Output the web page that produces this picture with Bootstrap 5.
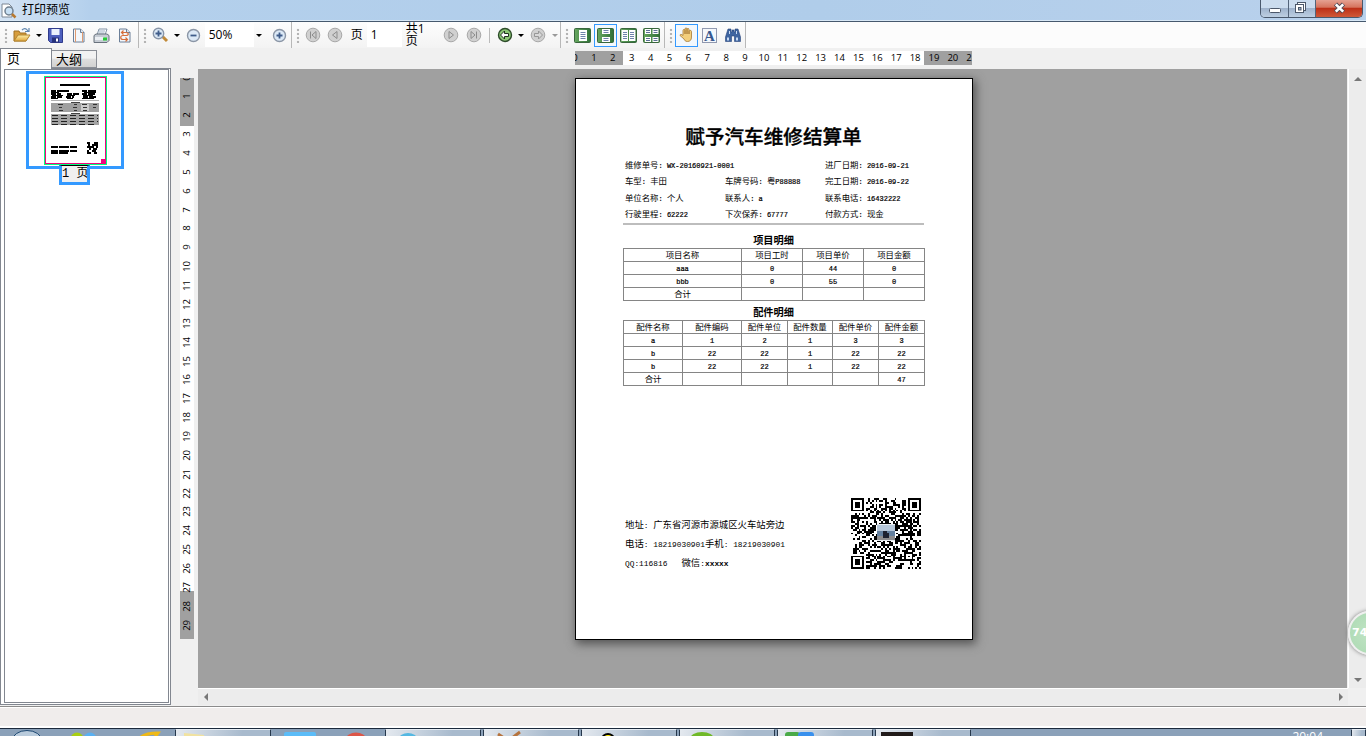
<!DOCTYPE html>
<html lang="zh-CN">
<head>
    <meta charset="UTF-8">
    <meta name="viewport" content="width=device-width, initial-scale=1.0">
    <title>打印预览</title>
    <link href="https://cdn.jsdelivr.net/npm/bootstrap@5.3.0/dist/css/bootstrap.min.css" rel="stylesheet">
    <style>
        body { width: 1366px; height: 736px; font: 12px/1 "Open Sans", "Noto Sans CJK SC", sans-serif; color: #000; background: #f0f0f0; }
        svg { display: block; flex: none; }

        /* title bar */
        .title-bar { height: 22px; background: linear-gradient(90deg, #d3e3f4, #b4d0ec 90px, #b0cdea 60%, #b9d1ec); border-bottom: 1px solid #46596e; box-shadow: inset 0 -1px #d8e8f6; padding-left: 1px; }
        .title-text { font-size: 12px; line-height: 20px; padding-left: 5px; }
        .win-buttons { width: 103px; height: 18px; margin-right: 3px; border: 1px solid #49586c; border-top: 0; border-radius: 0 0 5px 5px; overflow: hidden; }
        .win-btn { background: linear-gradient(#cbdcee 45%, #9fb3cc 50%, #bdcfe2); border-right: 1px solid #53647a; }
        .win-close { background: linear-gradient(#e5a192, #d6745e 42%, #bd3018 50%, #cf5838); }

        /* tool bar */
        .tool-bar { height: 26px; background: #fcfcfc; }
        .tool-group { height: 26px; padding-left: 3px; background: linear-gradient(#fdfdfd, #f3f3f3); border-right: 1px solid #b8b8b8; }
        .g-file { width: 139px; }
        .g-zoom { width: 153px; }
        .g-page { width: 269px; }
        .g-view { width: 104px; }
        .g-mode { width: 81px; }
        .grip { width: 7px; height: 15px; background: radial-gradient(circle at 3px 2px, #b4b4b4 1.2px, transparent 1.6px) 0 0 / 7px 4px; }
        .tool-btn { width: 23px; height: 23px; display: flex; align-items: center; justify-content: center; }
        .tool-btn.picked { border: 1px solid #3399ff; background: #f3f8fd; }
        .arrow { width: 11px; display: flex; justify-content: center; }
        .arrow::after { content: ""; border: 3px solid transparent; border-top-color: #000; border-bottom: 0; }
        .arrow.off::after { border-top-color: #999; }
        .edit { height: 24px; background: #fff; line-height: 24px; padding-left: 4px; }
        .split { width: 1px; height: 15px; background: #bbb; }

        /* left panel */
        .work { height: 658px; }
        .side { width: 172px; height: 658px; }
        .tabs { height: 20px; }
        .tab-on { width: 52px; height: 21px; background: #fff; border: 1px solid #828790; border-bottom: 0; padding: 3px 0 0 6px; font-size: 13px; z-index: 1; margin-bottom: -1px; position: relative; }
        .tab-off { width: 45px; height: 18px; align-self: flex-end; border: 1px solid #8a8e96; border-left: 0; background: linear-gradient(#f2f2f2 45%, #dedede 50%, #d2d2d2); padding: 2px 0 0 4px; font-size: 13px; }
        .side-box { width: 171px; height: 637px; border: 1px solid #828790; background: #fff; padding: 0 1px 1px 3px; }
        .side-list { height: 634px; width: 165px; border: 1px solid #828790; padding: 1px 0 0 21px; }
        .thumb { width: 98px; height: 98px; border: 3px solid #3399ff; padding: 2px 0 0 15px; }
        .thumb-name { width: 31px; height: 20px; margin: -4px 0 0 33px; border: 3px solid #3399ff; border-top: 1px solid #000; background: #f0f0f0; font: 12px/17px "Liberation Mono", "Noto Sans CJK SC", monospace; white-space: pre; overflow: hidden; }

        /* rulers */
        .ruler-h { width: 397px; height: 14px; margin: 3px 0 0 404px; background: linear-gradient(90deg, #a0a0a0 48px, #fff 0, #fff 349px, #a0a0a0 0); font-size: 9.5px; line-height: 14px; }
        .ruler-h span { width: 18.9px; flex: none; text-align: center; }
        .ruler-h span:first-child, .ruler-v span:first-child { margin: -9.4px 0 0 0; }
        .ruler-h span:first-child { margin: 0 0 0 -9.4px; }
        .ruler-v { width: 14px; height: 561px; margin: 9px 4px 0 9px; background: linear-gradient(#a0a0a0 48px, #fff 0, #fff 513px, #a0a0a0 0); font-size: 9.5px; }
        .ruler-v span { height: 18.87px; flex: none; width: 14px; line-height: 14px; writing-mode: vertical-rl; transform: rotate(180deg); text-align: center; }

        /* document view */
        .view { width: 1149px; height: 619px; background: #a0a0a0; padding: 9px 0 0 377px; }
        .sheet { width: 398px; height: 562px; border: 1px solid #000; background: #fff; box-shadow: 2px 3px 9px 1px #555; padding: 39px 48px 0 47px; font: 8.4px/1 "Liberation Serif", "Noto Sans CJK SC", serif; }
        .sheet i { font: 7px/1 "Liberation Mono", monospace; -webkit-text-stroke: .2px #000; }
        .sheet-title { height: 40px; font-size: 19.6px; font-weight: 500; line-height: 39px; -webkit-text-stroke: .3px #000; }
        .info { display: grid; grid-template-columns: 100px 100px 100px; grid-auto-rows: 16.3px; padding-left: 2px; height: 65px; line-height: 16px; white-space: pre; border-bottom: 0; }
        .rule { height: 2px; background: #bdbdbd; }
        .sub-title { font-size: 10.2px; font-weight: 700; height: 14px; line-height: 13px; margin-top: 9px; }
        .sub-title.second { margin-top: 5px; }
        .bill { width: 301px; table-layout: fixed; border-collapse: collapse; text-align: center; }
        .bill td { border: 1px solid #858585; height: 13px; padding: 0; line-height: 11px; overflow: hidden; white-space: nowrap; }
        .contact { margin-top: 112px; padding-left: 2px; font-size: 9.4px; }
        .contact i { font-size: 7.85px; -webkit-text-stroke: 0; }
        .contact p { height: 18.8px; margin: 0; line-height: 18.8px; white-space: pre; }
        .contact-text { width: 226px; padding-top: 18px; }

        /* scroll bars */
        .scroll-v { width: 18px; height: 619px; background: #ececec; border-left: 1px solid #fff; padding: 7px 0 5px; }
        .scroll-h { height: 17px; background: #ececec; border-top: 1px solid #fff; padding: 0 4px 0 5px; width: 1150px; }
        .ball { position: absolute; left: 1348px; top: 611px; width: 44px; height: 44px; border-radius: 50%; border: 2px solid #efefef; background: radial-gradient(#c1e4c4, #abd9b2); box-shadow: 0 0 4px #777; color: #fff; font: 700 11px/39px "DejaVu Sans", sans-serif; padding-left: 2px; }

        /* status and task bar */
        .status-bar { height: 22px; border-top: 1px solid #8b8b8b; box-shadow: inset 0 1px #fff, inset 0 -2px #fff; background: #f0edec; }
        .task-bar { height: 8px; background: #8ba1b9; border-top: 1px solid #1c2a3c; overflow: hidden; }
        .task { height: 12px; width: 96px; border: 1px solid #26384c; border-top-color: #e6edf4; background: linear-gradient(100deg, #e4e9ef, #a8bacd 70%); margin-right: 2px; }
        .task-icons { width: 175px; }
        .clock { font-size: 12px; line-height: 16px; color: #fff; padding-right: 28px; }
    </style>
</head>
<body class="overflow-hidden position-relative">
    <svg width="0" height="0" class="position-absolute">
        <defs>
            <linearGradient id="gold" x2="0" y2="1"><stop stop-color="#fff0a8"/><stop offset="1" stop-color="#e0a63c"/></linearGradient>
            <linearGradient id="leaf"><stop stop-color="#68a860"/><stop offset="1" stop-color="#2f7038"/></linearGradient>
            <symbol id="sheet" viewBox="0 0 13 15"><path d="M1.5 1h7l3.500 3.500v9.500h-10.500z" fill="#f3f7fb" stroke="#6b7f98"/><path d="M8.500 1v3.500h3.500" fill="#dbe5f0" stroke="#6b7f98"/></symbol>
            <symbol id="disc" viewBox="0 0 16 16"><circle cx="8" cy="8" r="6.800" fill="#d0d0d0" stroke="#a8a8a8"/></symbol>
            <symbol id="lens" viewBox="0 0 15 15"><circle cx="7.500" cy="7.500" r="6" fill="#dce9f6" stroke="#8b96a6" stroke-width="1.400"/></symbol>
            <symbol id="block" viewBox="0 0 17 15"><rect x=".5" y=".5" width="16" height="14" rx="1" fill="url(#leaf)" stroke="#38663c"/></symbol>
        </defs>
    </svg>

    <header class="title-bar d-flex">
        <svg width="16" height="20" viewBox="0 0 16 20"><path d="M1 4h7l3 3v10H1z" fill="#fff" stroke="#7c8794"/><circle cx="8" cy="11" r="4" fill="#c8e0f4" stroke="#708090" stroke-width="1.500"/><path d="M11 14l3.500 3.500" stroke="#b87a30" stroke-width="2.500"/></svg>
        <span class="title-text">打印预览</span>
        <div class="win-buttons d-flex ms-auto">
            <div class="win-btn"><svg width="27" height="17"><rect x="8.500" y="8.500" width="11" height="4" rx="1" fill="#fff" stroke="#4c586a"/></svg></div>
            <div class="win-btn"><svg width="26" height="17"><rect x="8.500" y="2.500" width="8" height="8" fill="#fff" stroke="#4c586a"/><rect x="6.500" y="4.500" width="8" height="8" fill="#fff" stroke="#4c586a"/><rect x="9.500" y="7.500" width="2.500" height="2.500" fill="#9eb3c9" stroke="#4c586a"/></svg></div>
            <div class="win-close"><svg width="47" height="17"><path d="M19.500 4l8 8m0-8l-8 8" stroke="#544b57" stroke-width="4.500"/><path d="M19.800 4.300l7.400 7.400m0-7.400l-7.400 7.400" stroke="#fff" stroke-width="2.600"/></svg></div>
        </div>
    </header>

    <nav class="tool-bar d-flex">
        <div class="tool-group g-file d-flex align-items-center">
            <div class="grip"></div>
            <div class="tool-btn"><svg width="18" height="16"><path d="M1 14V4h5l1 2h6v8z" fill="#d79d3c" stroke="#a07122"/><path d="M1 14l4-6h12l-4 6z" fill="url(#gold)" stroke="#b28431"/><path d="M9 3c2-2 4-2 6 1m1-3v3.500h-4" fill="none" stroke="#6288b0" stroke-width="1.200"/></svg></div>
            <div class="arrow"></div>
            <div class="tool-btn"><svg width="15" height="15"><path d="M.5.5h14v14h-12l-2-2z" fill="#4d5fbd" stroke="#303b8c"/><path d="M3.500 1h8v6h-8z" fill="#eaf1fc"/><path d="M4 9.500h7v5H4z" fill="#26317a"/><path d="M8 10.500h2v3H8z" fill="#fff"/></svg></div>
            <div class="tool-btn"><svg width="13" height="15"><use href="#sheet"/><path d="M3.500 1v13M10.500 4v10" stroke="#df9a70"/></svg></div>
            <div class="tool-btn"><svg width="17" height="15"><path d="M4 7l2-6h8l-2 6z" fill="#fff" stroke="#8293a6"/><path d="M6 3h6M5.500 5h6" stroke="#9eb0c4"/><path d="M1 7.500l2-1.500h11l2 1.500v5l-2 2H1z" fill="#c6ccd4" stroke="#69727d"/><path d="M2 9h9v3H2z" fill="#eceff3"/><path d="M10 9.500h4v3h-4z" fill="#25cc35"/></svg></div>
            <div class="tool-btn"><svg width="13" height="15"><use href="#sheet"/><path d="M4 4.500h4c3 0 3 3 0 3H5c-3 0-3 4 0 4h4M7.500 9.500l2 2-2 2M5.500 2.500l-2 2 2 2" fill="none" stroke="#d66f3c" stroke-width="1.200"/></svg></div>
        </div>
        <div class="tool-group g-zoom d-flex align-items-center">
            <div class="grip me-0"></div>
            <div class="tool-btn"><svg width="17" height="16"><path d="M10 9l5 5" stroke="#c18a39" stroke-width="3"/><circle cx="6.500" cy="6.500" r="5.200" fill="#dce9f6" stroke="#8895a8" stroke-width="1.400"/><path d="M3.500 6.500h6m-3-3v6" stroke="#3f5c8a" stroke-width="1.800"/></svg></div>
            <div class="arrow"></div>
            <div class="tool-btn"><svg width="15" height="15"><use href="#lens"/><path d="M4.500 7.500h6" stroke="#3f5c8a" stroke-width="1.800"/></svg></div>
            <div class="edit" style="width:50px">50%</div>
            <div class="arrow"></div>
            <div class="tool-btn ms-1"><svg width="15" height="15"><use href="#lens"/><path d="M4.500 7.500h6m-3-3v6" stroke="#3f5c8a" stroke-width="1.800"/></svg></div>
        </div>
        <div class="tool-group g-page d-flex align-items-center">
            <div class="grip"></div>
            <div class="tool-btn"><svg width="16" height="16"><use href="#disc"/><path d="M5.500 4.500v7M11 4.500v7L7 8z" fill="none" stroke="#8c8c8c"/></svg></div>
            <div class="tool-btn"><svg width="16" height="16"><use href="#disc"/><path d="M10 4.500v7L5.500 8z" fill="none" stroke="#8c8c8c"/></svg></div>
            <span class="ms-1">页</span>
            <div class="edit ms-1" style="width:36px">1</div>
            <span class="ms-1">共1页</span>
            <div class="tool-btn ms-1"><svg width="16" height="16"><use href="#disc"/><path d="M6 4.500v7L10.500 8z" fill="none" stroke="#8c8c8c"/></svg></div>
            <div class="tool-btn"><svg width="16" height="16"><use href="#disc"/><path d="M10.500 4.500v7M5 4.500v7L9 8z" fill="none" stroke="#8c8c8c"/></svg></div>
            <div class="split ms-1"></div>
            <div class="tool-btn ms-1"><svg width="16" height="16"><circle cx="8" cy="8" r="6.500" fill="#8bc674" stroke="#2e4c2b" stroke-width="1.400"/><path d="M3.500 8l4-4v2.500h4v3h-4V12z" fill="#fff" stroke="#20321e"/></svg></div>
            <div class="arrow"></div>
            <div class="tool-btn"><svg width="16" height="16"><use href="#disc"/><path d="M12.500 8l-4-4v2.500h-4v3h4V12z" fill="#d8d8d8" stroke="#979797"/></svg></div>
            <div class="arrow off"></div>
        </div>
        <div class="tool-group g-view d-flex align-items-center">
            <div class="grip"></div>
            <div class="tool-btn"><svg width="17" height="15"><use href="#block"/><path d="M5 2h8v11H5z" fill="#fff"/><path d="M6.500 4.500h5m-5 2h5m-5 2h5m-5 2h5" stroke="#6f83ab"/></svg></div>
            <div class="tool-btn picked"><svg width="17" height="15"><use href="#block"/><path d="M5 1h8v5H5zM5 9h8v5H5z" fill="#fff"/><path d="M6.500 2.500h5m-5 2h5m-5 6h5m-5 2h5" stroke="#6f83ab"/></svg></div>
            <div class="tool-btn"><svg width="17" height="15"><use href="#block"/><path d="M1.500 2H8v11H1.500zM9 2h6.500v11H9z" fill="#fff"/><path d="M3 4.500h4m-4 2h4m-4 2h4m-4 2h4m3-6h4m-4 2h4m-4 2h4m-4 2h4" stroke="#6f83ab"/></svg></div>
            <div class="tool-btn"><svg width="17" height="15"><use href="#block"/><path d="M2 1h6v5H2zM9.500 1h6v5h-6zM2 9h6v5H2zM9.500 9h6v5h-6z" fill="#fff"/><path d="M3 2.500h4m-4 2h4m-4 6h4m-4 2h4m3.500-10h4m-4 2h4m-4 6h4m-4 2h4" stroke="#5c6f96"/></svg></div>
        </div>
        <div class="tool-group g-mode d-flex align-items-center">
            <div class="grip"></div>
            <div class="tool-btn picked"><svg width="16" height="16"><path d="M5 12L1 8.500c0-1.500 1.500-1.500 3 0V3.500c0-1.500 2-1.500 2 0V7 2c0-1.500 2-1.500 2 0v5V2.500c0-1.500 2-1.500 2 0V7 4.500c0-1.500 2.500-1.500 2.500 0V10c0 3-1.500 4.500-4 4.500S6 13.500 5 12z" fill="#f3cf7c" stroke="#a67a35" stroke-width=".8"/></svg></div>
            <div class="tool-btn"><svg width="15" height="15"><rect x=".5" y=".5" width="14" height="14" fill="#f5f8fc" stroke="#2b3b66" stroke-dasharray="1 1"/><text x="7.500" y="13" font-family="Liberation Serif" font-weight="bold" font-size="15" fill="#36588f" text-anchor="middle">A</text></svg></div>
            <div class="tool-btn"><svg width="16" height="15"><path d="M3 1h3v3h1V2h2v2h1V1h3l2.500 8v4.500h-6V8h-3v5.500h-6V9z" fill="#3f65a0" stroke="#26437a" stroke-width=".6"/><path d="M2 9.500h2v3H2zM11 9.500h2v3h-2zM4 3h1v3H4zM11 3h1v3h-1z" fill="#c8daf2"/></svg></div>
        </div>
    </nav>

    <main class="work d-flex">
        <aside class="side">
            <div class="tabs d-flex">
                <div class="tab-on">页</div>
                <div class="tab-off">大纲</div>
            </div>
            <div class="side-box">
                <div class="side-list">
                    <div class="thumb">
                        <svg id="thumb-page" width="63" height="89" shape-rendering="crispEdges">
                            <rect x=".5" y=".5" width="62" height="88" fill="#fff" stroke="#00ff80"/>
                            <rect x="1.500" y="1.500" width="60" height="86" fill="none" stroke="#f0047f"/>
                            <rect x="57" y="83" width="5" height="5" fill="#f0047f"/>
                            <path d="M16 9h30" stroke="#000" stroke-width="2"/>
                            <path d="M7 14.500h18m13 0h14M7 18h10m6 0h12m3 0h13M7 21h11m4 0h8m9 0h13" stroke="#000" stroke-width="2" stroke-dasharray="5 1 7 0"/>
                            <path d="M7 16h8m25 0h12M8 19.500h11m4 0h8m8 0h10M7 22.500h7m9 0h6m9 0h12" stroke="#000"/>
                            <path d="M7 24h48" stroke="#b0b0b0"/><path d="M27 26h9m-9 11h9" stroke="#444"/>
                            <path d="M7 27h48v9H7z" fill="#a0a0a0"/><path d="M37 28h8v7h-8z" fill="#ccc"/>
                            <path d="M14 28.500h5m11 0h3m5 0h5m6 0h4M15 31.500h3m11 0h4m6 0h4m6 0h3M15 34h4m11 0h3m6 0h4" stroke="#333"/>
                            <path d="M7 38h48v11H7z" fill="#a4a4a4"/>
                            <path d="M8 39.500h46M8 42.500h46M8 45.500h46M8 48.500h44" stroke="#222" stroke-dasharray="6 3"/>
                            <path d="M7 70.500h26M7 74.500h26M7 77h17" stroke="#000" stroke-width="2" stroke-dasharray="7 1 3 0"/>
                            <path d="M43 67h3m4 0h4M44 69h2m2 0h6M43 71h7m2 0h2M45 73h2m2 0h4M43 75h2m3 0h4M43 77h4m3 0h3" stroke="#000" stroke-width="1.500"/>
                        </svg>
                    </div>
                    <div class="thumb-name">1 页</div>
                </div>
            </div>
        </aside>

        <section>
            <div class="ruler-h d-flex overflow-hidden" id="ruler-h"></div>
            <div class="d-flex mt-1">
                <div class="ruler-v d-flex flex-column overflow-hidden" id="ruler-v"></div>
                <div>
                    <div class="view">
                        <article class="sheet">
                            <div class="sheet-title text-center">赋予汽车维修结算单</div>
                            <div class="info">
                                <span>维修单号<i>: WX-20160921-0001</i></span><span></span><span>进厂日期<i>: 2016-09-21</i></span>
                                <span>车型<i>: </i>丰田</span><span>车牌号码<i>: </i>粤<i>P88888</i></span><span>完工日期<i>: 2016-09-22</i></span>
                                <span>单位名称<i>: </i>个人</span><span>联系人<i>: a</i></span><span>联系电话<i>: 16432222</i></span>
                                <span>行驶里程<i>: 62222</i></span><span>下次保养<i>: 67777</i></span><span>付款方式<i>: </i>现金</span>
                            </div>
                            <div class="rule"></div>
                            <div class="sub-title text-center">项目明细</div>
                            <table class="bill">
                                <colgroup><col width="118"><col width="61"><col width="61"><col width="61"></colgroup>
                                <tr><td>项目名称</td><td>项目工时</td><td>项目单价</td><td>项目金额</td></tr>
                                <tr><td><i>aaa</i></td><td><i>0</i></td><td><i>44</i></td><td><i>0</i></td></tr>
                                <tr><td><i>bbb</i></td><td><i>0</i></td><td><i>55</i></td><td><i>0</i></td></tr>
                                <tr><td>合计</td><td></td><td></td><td></td></tr>
                            </table>
                            <div class="sub-title second text-center">配件明细</div>
                            <table class="bill">
                                <colgroup><col width="59"><col width="59"><col width="46"><col width="45"><col width="46"><col width="46"></colgroup>
                                <tr><td>配件名称</td><td>配件编码</td><td>配件单位</td><td>配件数量</td><td>配件单价</td><td>配件金额</td></tr>
                                <tr><td><i>a</i></td><td><i>1</i></td><td><i>2</i></td><td><i>1</i></td><td><i>3</i></td><td><i>3</i></td></tr>
                                <tr><td><i>b</i></td><td><i>22</i></td><td><i>22</i></td><td><i>1</i></td><td><i>22</i></td><td><i>22</i></td></tr>
                                <tr><td><i>b</i></td><td><i>22</i></td><td><i>22</i></td><td><i>1</i></td><td><i>22</i></td><td><i>22</i></td></tr>
                                <tr><td>合计</td><td></td><td></td><td></td><td></td><td><i>47</i></td></tr>
                            </table>
                            <div class="contact d-flex">
                                <div class="contact-text">
                                    <p>地址<i>: </i>广东省河源市源城区火车站旁边</p>
                                    <p>电话<i>: 18219030901</i>手机<i>: 18219030901</i></p>
                                    <p><i>QQ:116816   </i>微信<i>:<b>xxxxx</b></i></p>
                                </div>
                                <svg id="qr" width="70" height="71" viewBox="0 0 37 37" preserveAspectRatio="none" shape-rendering="crispEdges"></svg>
                            </div>
                        </article>
                    </div>
                    <div class="scroll-h d-flex align-items-center justify-content-between">
                        <svg width="6" height="8"><path d="M5 0v8L1 4z" fill="#777"/></svg>
                        <svg width="6" height="8"><path d="M1 0v8l4-4z" fill="#777"/></svg>
                    </div>
                </div>
                <div class="scroll-v d-flex flex-column align-items-center justify-content-between">
                    <svg width="8" height="5"><path d="M0 5h8L4 1z" fill="#777"/></svg>
                    <svg width="8" height="5"><path d="M0 0h8L4 4z" fill="#777"/></svg>
                </div>
            </div>
        </section>
    </main>
    <div class="ball">74</div>

    <div class="status-bar"></div>
    <footer class="task-bar d-flex">
        <div class="task-icons">
            <svg width="175" height="8"><ellipse cx="27" cy="12" rx="15" ry="10.500" fill="#b9cbdc" stroke="#1d4872"/><circle cx="77" cy="10" r="6.500" fill="#a8cf12"/><circle cx="90" cy="10" r="6.500" fill="#58b0f2"/><path d="M141 8c4-3 8-4 17-4l-3 4" fill="none" stroke="#efb916" stroke-width="3"/></svg>
        </div>
        <div class="task"><svg width="40" height="8"><path d="M8 3l20 2v4H8z" fill="#f1e2a0"/></svg></div>
        <svg width="112" height="8"><rect x="11" y="3" width="32" height="8" rx="2" fill="#5bbcf8"/><ellipse cx="83" cy="10" rx="10" ry="6.500" fill="#dc5648"/></svg>
        <div class="task"><svg width="40" height="8"><ellipse cx="22" cy="9" rx="9" ry="6" fill="#54b8e2"/></svg></div>
        <div class="task"><svg width="40" height="8"><path d="M14 4l6 4M36 2l-8 6" stroke="#b5733d" stroke-width="3"/></svg></div>
        <div class="task"><svg width="40" height="8"><ellipse cx="26" cy="9" rx="6" ry="5" fill="#ffed00" stroke="#000" stroke-width="2"/></svg></div>
        <div class="task"><svg width="40" height="8"><ellipse cx="22" cy="9" rx="12" ry="7" fill="#70b928"/></svg></div>
        <div class="task"><svg width="40" height="8"><rect x="7" y="2" width="15" height="8" rx="3" fill="#4aaa48"/><rect x="20" y="2" width="16" height="8" rx="3" fill="#3990ed"/></svg></div>
        <div class="task"><svg width="40" height="8"><path d="M5 2h32v6H5z" fill="#211b1a"/></svg></div>
        <div class="clock ms-auto">20:04</div>
        <div class="task me-0" style="width:15px"></div>
    </footer>

    <script>
        // Ruler numbers, one per centimetre
        function fillRuler(id, last) {
            const ruler = document.getElementById(id);
            for (let n = 0; n <= last; n++) {
                const mark = document.createElement('span');
                mark.textContent = n;
                ruler.appendChild(mark);
            }
        }
        fillRuler('ruler-h', 21);
        fillRuler('ruler-v', 29);

        // QR code, 37 x 37 modules
        function finder(x, y) {
            const d = Math.max(Math.abs(x - 3), Math.abs(y - 3));
            return d === 3 || d <= 1;
        }
        let seed = 2016;
        let path = '';
        for (let y = 0; y < 37; y++) {
            for (let x = 0; x < 37; x++) {
                seed = (seed * 1103515245 + 12345) % 2147483648;
                let dark = seed / 2147483648 < 0.5;
                if (x < 8 && y < 8) dark = x < 7 && y < 7 && finder(x, y);
                else if (x > 28 && y < 8) dark = x > 29 && y < 7 && finder(x - 30, y);
                else if (x < 8 && y > 28) dark = x < 7 && y > 29 && finder(x, y - 30);
                else if (Math.abs(x - 30) < 3 && Math.abs(y - 30) < 3) dark = Math.max(Math.abs(x - 30), Math.abs(y - 30)) !== 1;
                else if (x === 6 || y === 6) dark = (x + y) % 2 === 0;
                if (dark) path += 'M' + x + ' ' + y + 'h1v1h-1z';
            }
        }
        document.getElementById('qr').innerHTML = '<path d="' + path + '"/>' +
            '<rect x="13.500" y="13.500" width="10" height="9" rx="1" fill="#e8ecf0"/>' +
            '<rect x="14" y="14" width="9" height="3" fill="#b4c5d8"/><rect x="14" y="17" width="9" height="3" fill="#64809f"/><rect x="14" y="20" width="9" height="2" fill="#8c8b8d"/>' +
            '<path d="M17 17h2v4h-2zM19 18h1v3h-1z" fill="#1d2130"/>';
    </script>
    <script src="https://cdn.jsdelivr.net/npm/bootstrap@5.3.0/dist/js/bootstrap.bundle.min.js"></script>
</body>
</html>
